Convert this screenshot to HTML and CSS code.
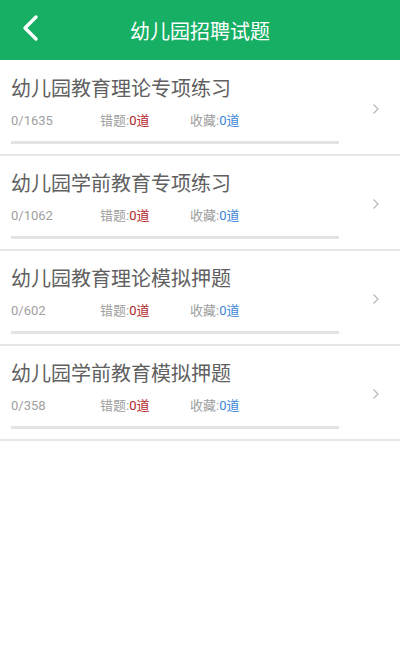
FILE: index.html
```html
<!DOCTYPE html>
<html lang="zh">
<head>
<meta charset="utf-8">
<link rel="stylesheet" href="styles.css">
</head>
<body>
<header class="topbar">
  <svg class="back" width="20" height="30" viewBox="0 0 20 30"><path d="M15 4 L4 15 L15 26" fill="none" stroke="#fff" stroke-width="3.4" stroke-linecap="round" stroke-linejoin="round"/></svg>
  <div class="title">幼儿园招聘试题</div>
</header>
<main class="list">
  <div class="item">
    <div class="body">
      <div class="name">幼儿园教育理论专项练习</div>
      <div class="stats"><span class="count">0/1635</span><span class="wrong">错题:<em class="red">0道</em></span><span class="fav">收藏:<em class="blue">0道</em></span></div>
      <div class="bar"></div>
    </div>
    <svg class="chev" width="8" height="12" viewBox="0 0 8 12"><path d="M1.5 1.5 L6 6 L1.5 10.5" fill="none" stroke="#bbb" stroke-width="1.3"/></svg>
  </div>
  <div class="item">
    <div class="body">
      <div class="name">幼儿园学前教育专项练习</div>
      <div class="stats"><span class="count">0/1062</span><span class="wrong">错题:<em class="red">0道</em></span><span class="fav">收藏:<em class="blue">0道</em></span></div>
      <div class="bar"></div>
    </div>
    <svg class="chev" width="8" height="12" viewBox="0 0 8 12"><path d="M1.5 1.5 L6 6 L1.5 10.5" fill="none" stroke="#bbb" stroke-width="1.3"/></svg>
  </div>
  <div class="item">
    <div class="body">
      <div class="name">幼儿园教育理论模拟押题</div>
      <div class="stats"><span class="count">0/602</span><span class="wrong">错题:<em class="red">0道</em></span><span class="fav">收藏:<em class="blue">0道</em></span></div>
      <div class="bar"></div>
    </div>
    <svg class="chev" width="8" height="12" viewBox="0 0 8 12"><path d="M1.5 1.5 L6 6 L1.5 10.5" fill="none" stroke="#bbb" stroke-width="1.3"/></svg>
  </div>
  <div class="item">
    <div class="body">
      <div class="name">幼儿园学前教育模拟押题</div>
      <div class="stats"><span class="count">0/358</span><span class="wrong">错题:<em class="red">0道</em></span><span class="fav">收藏:<em class="blue">0道</em></span></div>
      <div class="bar"></div>
    </div>
    <svg class="chev" width="8" height="12" viewBox="0 0 8 12"><path d="M1.5 1.5 L6 6 L1.5 10.5" fill="none" stroke="#bbb" stroke-width="1.3"/></svg>
  </div>
</main>
</body>
</html>
```

FILE: styles.css
```css
* { box-sizing: border-box; }
html, body { margin: 0; padding: 0; background: #fff; }
body {
  width: 400px;
  height: 666px;
  font-family: Roboto, "Noto Sans CJK SC", sans-serif;
  overflow: hidden;
}
.topbar {
  height: 60px;
  background: #16af64;
  display: flex;
  align-items: center;
  position: relative;
}
.back {
  position: absolute;
  left: 21px;
  top: 13px;
}
.title {
  flex: 1;
  text-align: center;
  color: #fff;
  font-size: 20px;
  line-height: 60px;
  padding-top: 1px;
  font-family: "Noto Sans CJK SC", sans-serif;
}
.list { padding-top: 1px; }
.item {
  display: flex;
  align-items: center;
  height: 95px;
  padding: 12px 0 10px 11px;
  border-bottom: 2px solid #e6e6e6;
}
.body { flex: 1; }
.name {
  font-family: "Noto Sans CJK SC", sans-serif;
  font-size: 20px;
  line-height: 28px;
  height: 28px;
  color: #606060;
}
.stats {
  display: flex;
  margin-top: 9px;
  font-size: 13px;
  line-height: 20px;
  height: 20px;
  color: #a0a0a0;
}
.stats em { font-style: normal; }
.count { width: 89px; }
.wrong { width: 90px; }
.red { color: #b3262a; }
.blue { color: #3d86d8; }
.bar {
  margin-top: 10px;
  width: 328px;
  height: 3px;
  background: #e3e3e3;
}
.chev {
  margin-right: 20px;
  margin-top: 0;
}
```
